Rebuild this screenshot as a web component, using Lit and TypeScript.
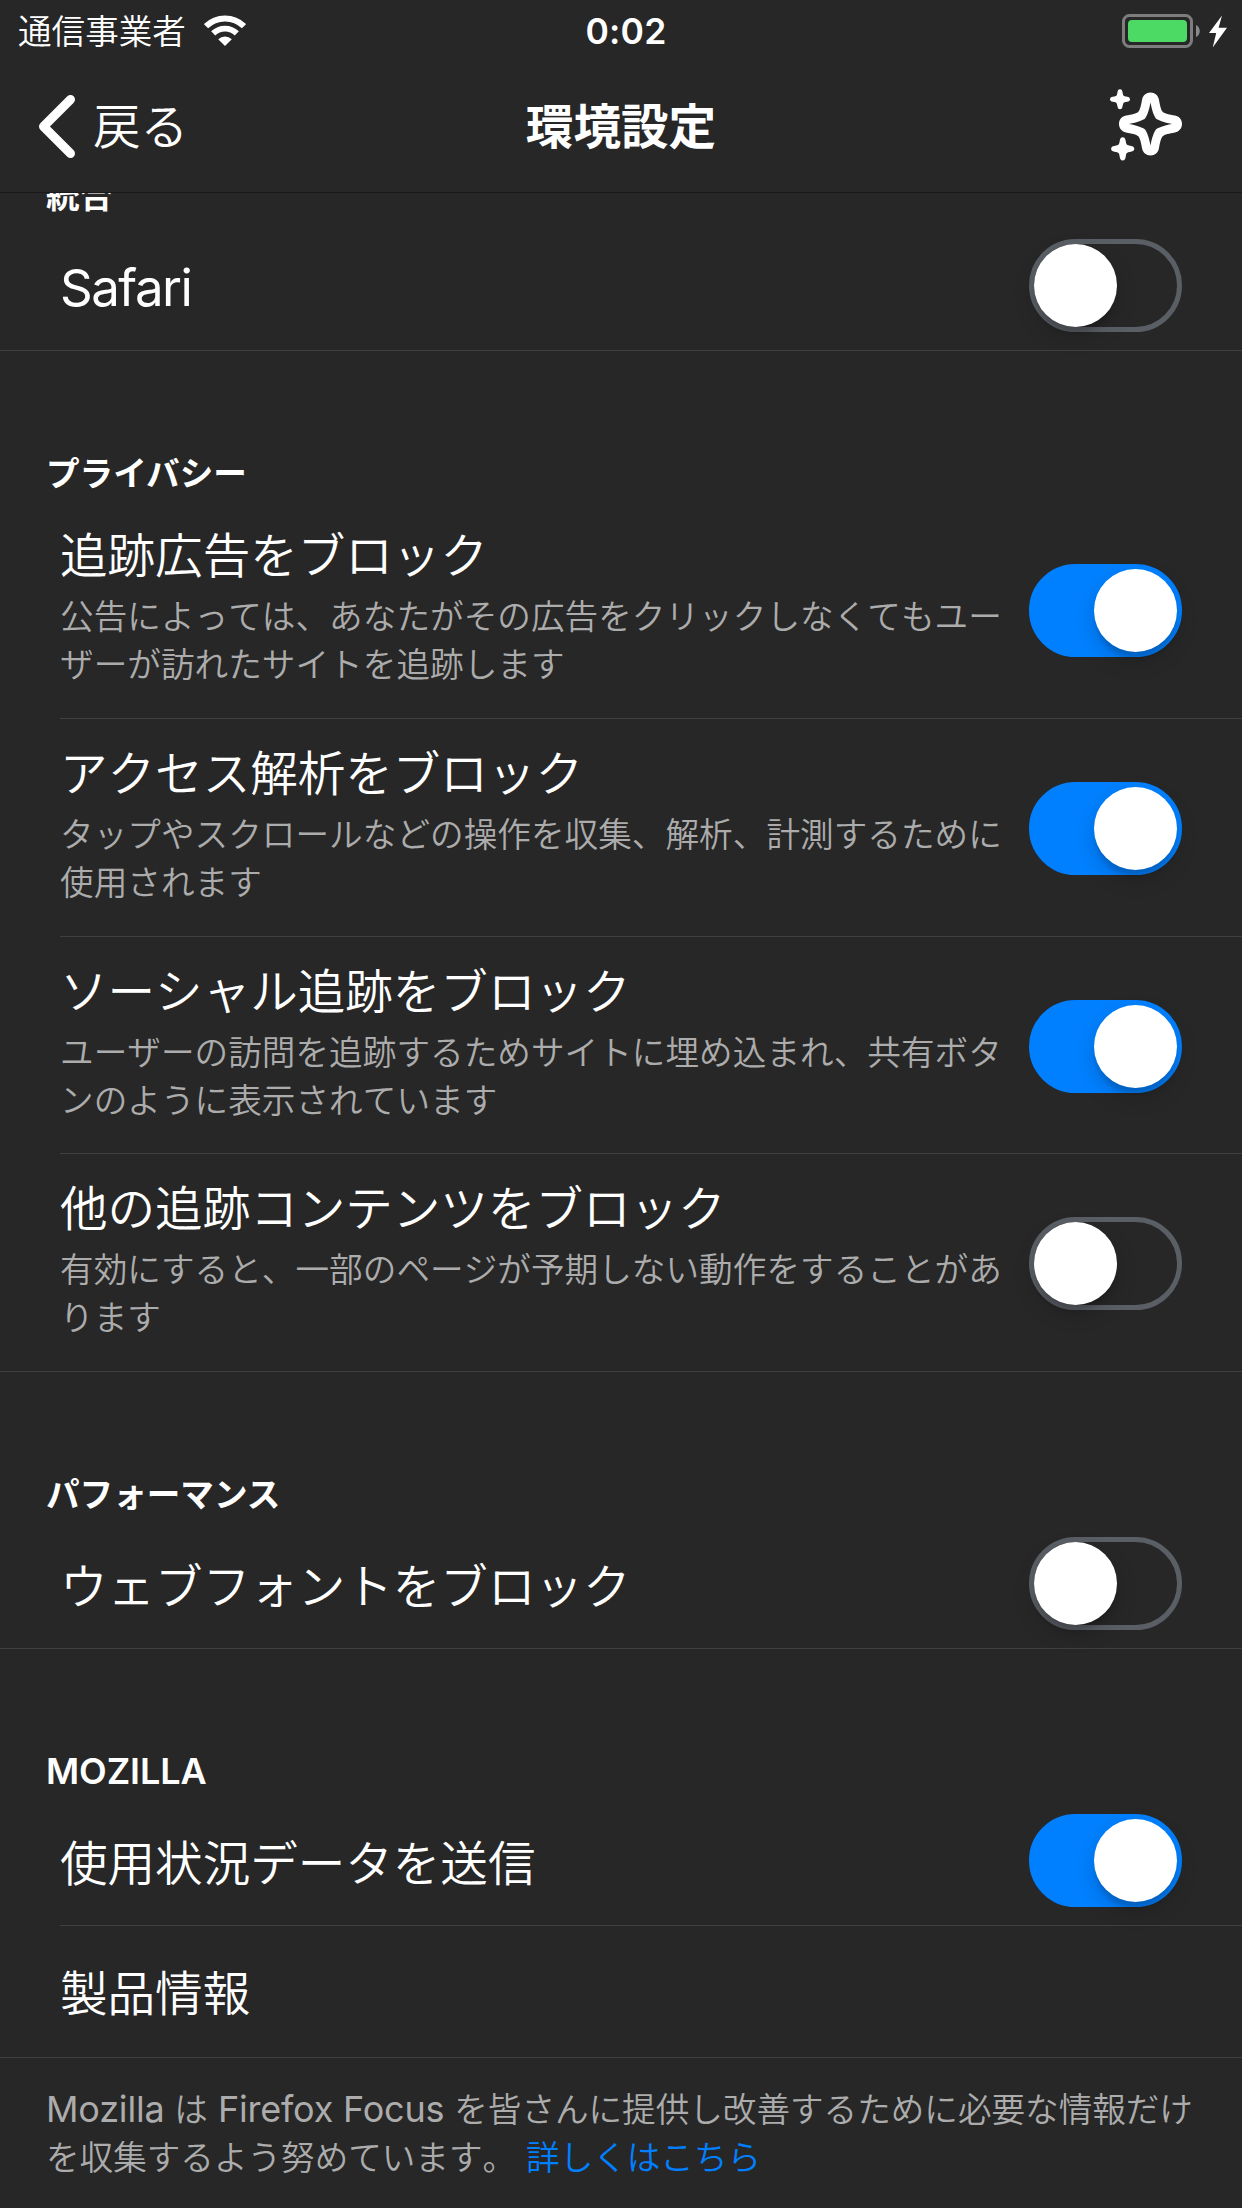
import { LitElement, html, css, svg, nothing } from "lit";
import { customElement, property } from "lit/decorators.js";

interface Row {
  title: string;
  latin?: boolean;
  detail?: string;
  on?: boolean;
  height: number;
}

interface Section {
  name: string;
  latin?: boolean;
  kind: string;
  rows: Row[];
}

const SECTIONS: Section[] = [
  {
    name: "統合",
    kind: "first",
    rows: [{ title: "Safari", latin: true, on: false, height: 132 }],
  },
  {
    name: "プライバシー",
    kind: "privacy",
    rows: [
      {
        title: "追跡広告をブロック",
        detail: "公告によっては、あなたがその広告をクリックしなくてもユー\nザーが訪れたサイトを追跡します",
        on: true,
        height: 218,
      },
      {
        title: "アクセス解析をブロック",
        detail: "タップやスクロールなどの操作を収集、解析、計測するために\n使用されます",
        on: true,
        height: 218,
      },
      {
        title: "ソーシャル追跡をブロック",
        detail: "ユーザーの訪問を追跡するためサイトに埋め込まれ、共有ボタ\nンのように表示されています",
        on: true,
        height: 217,
      },
      {
        title: "他の追跡コンテンツをブロック",
        detail: "有効にすると、一部のページが予期しない動作をすることがあ\nります",
        on: false,
        height: 218,
      },
    ],
  },
  {
    name: "パフォーマンス",
    kind: "plain",
    rows: [{ title: "ウェブフォントをブロック", on: false, height: 132 }],
  },
  {
    name: "MOZILLA",
    latin: true,
    kind: "plain",
    rows: [
      { title: "使用状況データを送信", on: true, height: 132 },
      { title: "製品情報", height: 132 },
    ],
  },
];

@customElement("toggle-switch")
export class ToggleSwitch extends LitElement {
  @property({ type: Boolean }) on = false;

  static styles = css`
    :host {
      display: block;
      flex: none;
    }
    .track {
      box-sizing: border-box;
      display: flex;
      width: 153px;
      height: 93px;
      margin-top: 2px;
      border: 5px solid #5a5f66;
      border-radius: 47px;
    }
    .track.on {
      justify-content: flex-end;
      border-color: #0080ff;
      background: #0080ff;
    }
    .knob {
      width: 83px;
      height: 83px;
      border-radius: 50%;
      background: #fff;
      box-shadow: 0 9px 22px rgba(0, 0, 0, 0.16), 0 8px 5px -2px rgba(0, 0, 0, 0.14);
    }
  `;

  render() {
    return html`<div class="track ${this.on ? "on" : ""}"><div class="knob"></div></div>`;
  }
}

const STAR = svg`<path fill-rule="evenodd" d="
  M0-31.5C4.5-31.5 7.6-28.5 8.4-24.5C9.4-19 10.4-14 12.2-12.2C14-10.4 19-9.4 24.5-8.4C28.5-7.6 31.5-4.5 31.5 0
  C31.5 4.5 28.5 7.6 24.5 8.4C19 9.4 14 10.4 12.2 12.2C10.4 14 9.4 19 8.4 24.5C7.6 28.5 4.5 31.5 0 31.5
  C-4.5 31.5-7.6 28.5-8.4 24.5C-9.4 19-10.4 14-12.2 12.2C-14 10.4-19 9.4-24.5 8.4C-28.5 7.6-31.5 4.5-31.5 0
  C-31.5-4.5-28.5-7.6-24.5-8.4C-19-9.4-14-10.4-12.2-12.2C-10.4-14-9.4-19-8.4-24.5C-7.6-28.5-4.5-31.5 0-31.5Z
  M0-21.5C-1.5-13-3.8-7.6-5.4-5.4C-7.6-3.8-13-1.5-21.5 0C-13 1.5-7.6 3.8-5.4 5.4C-3.8 7.6-1.5 13 0 21.5
  C1.5 13 3.8 7.6 5.4 5.4C7.6 3.8 13 1.5 21.5 0C13-1.5 7.6-3.8 5.4-5.4C3.8-7.6 1.5-13 0-21.5Z"/>`;

const SPARK_D =
  "M0-10C1.7-10 2.2-8.8 2.5-7.2C2.9-4.9 3.1-4.2 3.6-3.6C4.2-3.1 4.9-2.9 7.2-2.5C8.8-2.2 10-1.7 10 0C10 1.7 8.8 2.2 7.2 2.5C4.9 2.9 4.2 3.1 3.6 3.6C3.1 4.2 2.9 4.9 2.5 7.2C2.2 8.8 1.7 10 0 10C-1.7 10-2.2 8.8-2.5 7.2C-2.9 4.9-3.1 4.2-3.6 3.6C-4.2 3.1-4.9 2.9-7.2 2.5C-8.8 2.2-10 1.7-10 0C-10-1.7-8.8-2.2-7.2-2.5C-4.9-2.9-4.2-3.1-3.6-3.6C-3.1-4.2-2.9-4.9-2.5-7.2C-2.2-8.8-1.7-10 0-10Z";

@customElement("app-root")
export class AppRoot extends LitElement {
  static styles = css`
    :host {
      display: flex;
      flex-direction: column;
      box-sizing: border-box;
      width: 1242px;
      height: 2208px;
      overflow: hidden;
      background: #272727;
      color: #fff;
      font-family: "Noto Sans CJK JP", sans-serif;
      font-weight: 350;
      font-kerning: none;
      white-space: nowrap;
    }
    svg {
      display: block;
    }
    .latin {
      font-family: Inter, "Liberation Sans", sans-serif;
      font-weight: 400;
      font-kerning: normal;
    }
    .status {
      flex: none;
      display: grid;
      grid-template-columns: 1fr auto 1fr;
      align-items: center;
      height: 60px;
      padding: 0 14px 0 18px;
    }
    .carrier {
      display: flex;
      align-items: center;
      gap: 18px;
      font-size: 33.6px;
      line-height: 56px;
    }
    .carrier span {
      padding-bottom: 2px;
    }
    .time {
      padding: 2px 0 0 6px;
      font-size: 35.5px;
      line-height: 60px;
      font-weight: 600;
      letter-spacing: 0.2px;
    }
    .power {
      display: flex;
      justify-content: flex-end;
      align-items: center;
    }
    .nav {
      flex: none;
      display: grid;
      grid-template-columns: 1fr auto 1fr;
      align-items: center;
      height: 132px;
      padding: 0 60px 0 36px;
      border-bottom: 1px solid #1a1a1a;
      font-size: 47.6px;
      line-height: 124px;
    }
    .back {
      display: flex;
      align-items: center;
      gap: 13px;
    }
    .back span,
    .nav-title {
      padding-bottom: 4px;
    }
    .nav-title {
      font-weight: 700;
      margin-right: -24px;
    }
    .whats-new {
      display: flex;
      justify-content: flex-end;
      padding-bottom: 5px;
    }
    .content {
      flex: 1;
      min-height: 0;
      overflow: hidden;
    }
    .heading {
      padding-left: 46px;
      font-size: 33.6px;
      line-height: 48px;
      font-weight: 700;
      font-kerning: normal;
    }
    .heading.latin {
      font-size: 36px;
      line-height: 47px;
      font-weight: 600;
      letter-spacing: -0.1px;
    }
    .first .heading {
      margin-top: -23px;
      padding-bottom: 1px;
    }
    .privacy .heading {
      padding: 97px 0 5px 46px;
    }
    .plain .heading {
      padding-top: 97px;
    }
    .plain .heading.latin {
      padding-top: 99px;
      line-height: 46px;
    }
    .row {
      box-sizing: border-box;
      display: flex;
      align-items: center;
      justify-content: space-between;
      margin-left: 60px;
      padding-right: 60px;
      border-bottom: 1px solid #404040;
    }
    .row:last-child {
      margin-left: 0;
      padding-left: 60px;
    }
    .label {
      font-size: 47.6px;
      line-height: 70px;
      letter-spacing: -0.05px;
    }
    .switchable .label {
      padding-top: 2px;
    }
    .plain-row .label {
      padding-bottom: 2px;
    }
    .switchable .label.latin {
      font-size: 51px;
      letter-spacing: -1.5px;
      padding-top: 6px;
    }
    .detail {
      margin-top: 3px;
      font-size: 33.6px;
      line-height: 47.6px;
      letter-spacing: 0.06px;
      color: #acacac;
      white-space: pre;
    }
    .detailed {
      align-self: flex-start;
      padding-top: 17px;
    }
    .footnote {
      padding: 26px 0 0 46px;
      font-size: 33.6px;
      line-height: 48px;
      color: #acacac;
    }
    .footnote .latin {
      font-size: 36px;
      line-height: 0;
      letter-spacing: -0.2px;
      white-space: pre;
    }
    .link {
      color: #0080ff;
    }
  `;

  private renderRow(row: Row) {
    const kind = row.detail ? "detailed" : row.on === undefined ? "plain-row" : "switchable";
    return html`
      <div class="row" style="height:${row.height}px">
        <div class=${kind}>
          <div class="label ${row.latin ? "latin" : ""}">${row.title}</div>
          ${row.detail ? html`<div class="detail">${row.detail}</div>` : nothing}
        </div>
        ${row.on === undefined ? nothing : html`<toggle-switch ?on=${row.on}></toggle-switch>`}
      </div>
    `;
  }

  render() {
    return html`
      <div class="status">
        <div class="carrier">
          <span>通信事業者</span>
          <svg width="42" height="32" viewBox="0 0 42 32" fill="none" stroke="#fff">
            <path d="M2 11.2A27 27 0 0 1 40 11.2" stroke-width="6" />
            <path d="M9.2 18.4A16.8 16.8 0 0 1 32.8 18.4" stroke-width="5.8" />
            <path d="M14.2 24.2A10 10 0 0 1 27.8 24.2L21 31Z" fill="#fff" stroke="none" />
          </svg>
        </div>
        <div class="time latin">0:02</div>
        <div class="power">
          <svg width="106" height="34" viewBox="0 0 106 34">
            <rect x="1.5" y="1.5" width="68" height="31" rx="6" fill="none" stroke="#7d7d7d" stroke-width="3" />
            <rect x="6" y="6" width="59" height="22" rx="4" fill="#4cd964" />
            <path d="M74 11C79 13 79 21 74 23Z" fill="#8a8a8a" />
            <path d="M100 1.5L87 19H94.2L90.7 33.5L105 13.8H96.6Z" fill="#fff" />
          </svg>
        </div>
      </div>

      <div class="nav">
        <div class="back">
          <svg width="44" height="68" viewBox="0 0 44 68" fill="none" stroke="#fff" stroke-width="9" stroke-linecap="round" stroke-linejoin="round">
            <path d="M34.5 7.5L7.5 34.5L34.5 61.5" />
          </svg>
          <span>戻る</span>
        </div>
        <div class="nav-title">環境設定</div>
        <div class="whats-new">
          <svg width="72" height="76" viewBox="0 0 72 76" fill="#fff">
            <g transform="translate(40.5 38)">${STAR}</g>
            <path transform="translate(10 13.3)" d=${SPARK_D} />
            <path transform="translate(12.7 62.8) scale(1.16)" d=${SPARK_D} />
          </svg>
        </div>
      </div>

      <div class="content">
        ${SECTIONS.map(
          (s) => html`
            <div class=${s.kind}>
              <div class="heading ${s.latin ? "latin" : ""}">${s.name}</div>
              <div>${s.rows.map((r) => this.renderRow(r))}</div>
            </div>
          `
        )}
        <div class="footnote">
          <span class="latin">Mozilla </span>は<span class="latin"> Firefox Focus </span>を皆さんに提供し改善するために必要な情報だけ<br />を収集するよう努めています。<span class="latin"> </span><span class="link">詳しくはこちら</span>
        </div>
      </div>
    `;
  }
}
